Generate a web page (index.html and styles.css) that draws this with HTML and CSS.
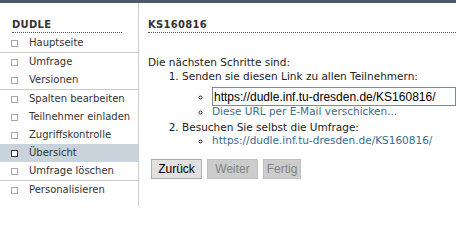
FILE: index.html
```html
<!DOCTYPE html>
<html lang="de">
<head>
<meta charset="utf-8">
<title>KS160816</title>
<link rel="stylesheet" href="styles.css">
</head>
<body>
<div class="topbar"></div>
<div class="layout">
  <nav class="sidebar">
    <h2 class="side-title">DUDLE</h2>
    <ul class="nav">
      <li><span class="box"></span>Hauptseite</li>
      <li class="grp"><span class="box"></span>Umfrage</li>
      <li><span class="box"></span>Versionen</li>
      <li class="grp"><span class="box"></span>Spalten bearbeiten</li>
      <li><span class="box"></span>Teilnehmer einladen</li>
      <li><span class="box"></span>Zugriffskontrolle</li>
      <li class="active"><span class="box"></span>Übersicht</li>
      <li><span class="box"></span>Umfrage löschen</li>
      <li class="grp"><span class="box"></span>Personalisieren</li>
    </ul>
  </nav>
  <main class="main">
    <h1 class="title">KS160816</h1>
    <p class="intro">Die nächsten Schritte sind:</p>
    <ol class="steps">
      <li>Senden sie diesen Link zu allen Teilnehmern:
        <ul class="sub">
          <li class="inputrow"><input class="url" type="text" value="https://dudle.inf.tu-dresden.de/KS160816/"></li>
          <li><a href="#">Diese URL per E-Mail verschicken...</a></li>
        </ul>
      </li>
      <li class="second">Besuchen Sie selbst die Umfrage:
        <ul class="sub">
          <li><a href="#">https://dudle.inf.tu-dresden.de/KS160816/</a></li>
        </ul>
      </li>
    </ol>
    <div class="actions">
      <button class="btn btn-back" type="button">Zurück</button>
      <button class="btn btn-next" type="button" disabled>Weiter</button>
      <button class="btn btn-done" type="button" disabled>Fertig</button>
    </div>
  </main>
</div>
</body>
</html>
```

FILE: styles.css
```css
html, body {
  margin: 0;
  padding: 0;
  background: #ffffff;
}

body {
  font-family: "DejaVu Sans", Verdana, sans-serif;
  font-size: 10px;
  color: #222222;
  overflow: hidden;
}

.topbar {
  height: 3px;
  background: #4b5a6b;
}

.layout {
  display: flex;
  height: 203px;
}

.sidebar {
  flex: none;
  width: 138px;
  border-right: 1px solid #cccccc;
}

.side-title {
  margin: 15px 16px 1px 12px;
  padding: 0 0 1px 0;
  font-size: 10px;
  font-weight: bold;
  line-height: 13px;
  letter-spacing: 0.3px;
  color: #333333;
  border-bottom: 1px dotted #555555;
}

.nav {
  list-style: none;
  margin: 0;
  padding: 0;
}

.nav li {
  display: flex;
  align-items: center;
  height: 18px;
  line-height: 18px;
  padding-left: 11px;
  color: #333333;
}

.nav li.grp {
  border-top: 1px solid #cccccc;
}

.nav li.active {
  background: #c9d3dc;
}

.box {
  flex: none;
  width: 5px;
  height: 5px;
  border: 1px solid #a8a8a8;
  background: #ffffff;
  margin-right: 11px;
}

.nav li.active .box {
  border-color: #333333;
}

.main {
  flex: 1;
  min-width: 0;
  padding-left: 9px;
  font-size: 10.5px;
}

.title {
  margin: 15px 0 1px 0;
  padding: 0 0 1px 0;
  font-size: 10px;
  font-weight: bold;
  line-height: 13px;
  letter-spacing: 0.3px;
  color: #333333;
  border-bottom: 1px dotted #555555;
}

.intro {
  margin: 23px 0 0 0;
  line-height: 13px;
}

.steps {
  margin: 1px 0 0 0;
  padding-left: 34px;
  line-height: 13px;
}

.steps > li.second {
  margin-top: 3px;
}

.sub {
  margin: 0;
  padding-left: 30px;
  list-style: circle;
}

.sub li.inputrow {
  height: 18px;
  padding-top: 4px;
  line-height: 19px;
}

.url {
  box-sizing: border-box;
  width: 244px;
  height: 19px;
  margin: 0;
  padding: 0 1px;
  vertical-align: top;
  border: 1px solid #828790;
  font-family: "Liberation Sans", Arial, sans-serif;
  font-size: 12px;
  color: #000000;
  background: #ffffff;
  outline: none;
}

.sub a {
  color: #3a6d92;
  text-decoration: none;
}

.actions {
  display: flex;
  gap: 5px;
  margin: 12px 0 0 3px;
}

.btn {
  box-sizing: border-box;
  height: 20px;
  padding: 0;
  font-family: "Liberation Sans", Arial, sans-serif;
  font-size: 12px;
  border: 1px solid #adadad;
  background: #e1e1e1;
  color: #000000;
  border-radius: 0;
}

.btn:disabled {
  background: #cccccc;
  border-color: #bfbfbf;
  color: #838383;
}

.btn-back,
.btn-next {
  width: 51px;
}

.btn-done {
  width: 38px;
}
```
